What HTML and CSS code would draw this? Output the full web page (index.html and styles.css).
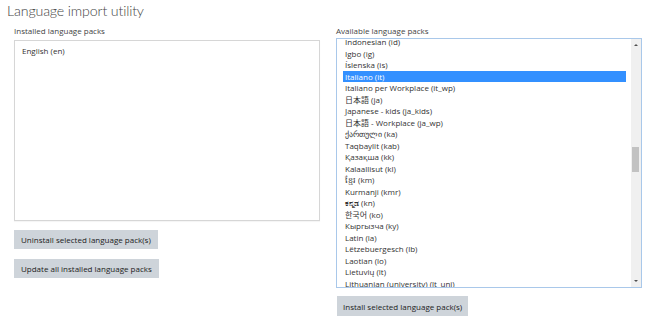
FILE: index.html
```html
<!DOCTYPE html>
<html>
<head>
<meta charset="utf-8">
<link rel="stylesheet" href="styles.css">
</head>
<body>
<div class="page">
  <h2 class="title">Language import utility</h2>
  <div class="columns">
    <div class="col">
      <div class="label">Installed language packs</div>
      <div class="installed">
        <div class="opt">English (en)</div>
      </div>
      <div class="btn-stack">
        <button class="btn">Uninstall selected language pack(s)</button>
        <button class="btn">Update all installed language packs</button>
      </div>
    </div>
    <div class="col">
      <div class="label">Available language packs</div>
      <div class="available">
        <div class="list">
          <div class="item">Indonesian (id)</div>
          <div class="item">Igbo (ig)</div>
          <div class="item">Íslenska (is)</div>
          <div class="item selected">Italiano (it)</div>
          <div class="item">Italiano per Workplace (it_wp)</div>
          <div class="item">日本語 (ja)</div>
          <div class="item">Japanese - kids (ja_kids)</div>
          <div class="item">日本語 - Workplace (ja_wp)</div>
          <div class="item">ქართული (ka)</div>
          <div class="item">Taqbaylit (kab)</div>
          <div class="item">Қазақша (kk)</div>
          <div class="item">Kalaallisut (kl)</div>
          <div class="item">ខ្មែរ (km)</div>
          <div class="item">Kurmanji (kmr)</div>
          <div class="item">ಕನ್ನಡ (kn)</div>
          <div class="item">한국어 (ko)</div>
          <div class="item">Кыргызча (ky)</div>
          <div class="item">Latin (la)</div>
          <div class="item">Lëtzebuergesch (lb)</div>
          <div class="item">Laotian (lo)</div>
          <div class="item">Lietuvių (lt)</div>
          <div class="item">Lithuanian (university) (lt_uni)</div>
        </div>
        <div class="scrollbar">
          <span class="arrow up"></span>
          <span class="thumb"></span>
          <span class="arrow down"></span>
        </div>
      </div>
      <div class="btn-stack">
        <button class="btn btn-install">Install selected language pack(s)</button>
      </div>
    </div>
  </div>
</div>
</body>
</html>
```
FILE: styles.css
```css
html, body {
  margin: 0;
  padding: 0;
  background: #fff;
}
body {
  font-family: "Open Sans", "Noto Sans", "Noto Sans CJK JP", sans-serif;
  color: #333;
  font-size: 8px;
}
.page {
  padding: 0 0 0 7px;
}
.title {
  margin: 0;
  font-family: Lato, "Open Sans", sans-serif;
  font-weight: 300;
  font-size: 14.2px;
  letter-spacing: -0.15px;
  line-height: 22px;
  color: #444;
}
.columns {
  display: flex;
  gap: 16px;
  padding-left: 7px;
  margin-top: 1px;
}
.col {
  width: 306px;
  display: flex;
  flex-direction: column;
}
.label {
  font-size: 8px;
  line-height: 15px;
  color: #444;
}
.installed {
  border: 1px solid #d6d6d6;
  box-shadow: 0 1px 1px rgba(0,0,0,0.04);
  padding: 4px 7px;
  box-sizing: border-box;
  height: 181px;
  margin-top: 2px;
}
.opt {
  line-height: 11px;
}
.btn-stack {
  display: flex;
  flex-direction: column;
  align-items: flex-start;
  gap: 10px;
  margin-top: 9px;
}
.btn {
  font-family: inherit;
  font-size: 8px;
  color: #222;
  background: #ced4da;
  border: none;
  border-radius: 0;
  height: 19px;
  padding: 0 7px;
}
.btn-install {
  height: 20px;
  margin-top: -1px;
  margin-left: 1px;
  padding: 0 6px;
}
.available {
  position: relative;
  border: 1px solid #a9c8ea;
  height: 250px;
  box-sizing: border-box;
  overflow: hidden;
  display: flex;
  width: 306px;
}
.list {
  flex: 1;
  padding: 0 5px 0 6px;
  margin-top: -3px;
}
.item {
  height: 11.52px;
  line-height: 11.52px;
  padding-left: 2px;
  white-space: nowrap;
}
.item.selected {
  background: #3390ff;
  color: #fff;
}
.scrollbar {
  width: 10px;
  background: #f0f0f0;
  position: relative;
  flex: none;
}
.thumb {
  position: absolute;
  left: 1px;
  right: 2px;
  top: 108px;
  height: 25px;
  background: #c2c2c2;
}
.arrow {
  position: absolute;
  left: 3px;
  width: 0;
  height: 0;
  border-left: 2px solid transparent;
  border-right: 2px solid transparent;
}
.arrow.up {
  top: 5px;
  border-bottom: 2px solid #505050;
}
.arrow.down {
  bottom: 5px;
  border-top: 2px solid #505050;
}
```
